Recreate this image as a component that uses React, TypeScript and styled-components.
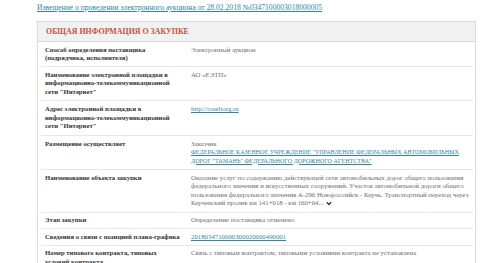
import React from 'react';
import styled, { createGlobalStyle } from 'styled-components';

const GlobalStyle = createGlobalStyle`
  html, body {
    margin: 0;
    padding: 0;
    background: #ffffff;
  }
  body {
    font-family: "Liberation Serif", "DejaVu Serif", serif;
    color: #333;
  }
`;

const Page = styled.div`
  padding: 3px 4px 0 37px;
  width: 480px;
  box-sizing: border-box;
`;

const TopLink = styled.a`
  display: block;
  font-size: 7.6px;
  line-height: 9px;
  color: #2f86a6;
  text-decoration: underline;
  margin-bottom: 9px;
`;

const Card = styled.section`
  border: 1px solid #dcdcdc;
  border-bottom: none;
  box-shadow: 0 0 2px rgba(0, 0, 0, 0.06);
`;

const Header = styled.div`
  background: #eff1f2;
  border-bottom: 1px solid #d6d8da;
  height: 19px;
  display: flex;
  align-items: center;
  padding-left: 8px;
`;

const Title = styled.h2`
  margin: 0;
  font-size: 7.9px;
  font-weight: bold;
  color: #c4553a;
`;

const Rows = styled.div`
  padding: 0 2px 0 3px;
`;

const Row = styled.div<{ $pad?: number }>`
  display: grid;
  grid-template-columns: 146px minmax(0, 1fr);
  padding: ${(p) => p.$pad ?? 3.5}px 1px ${(p) => p.$pad ?? 3.5}px 4px;
  border-bottom: 1px solid #e6e6e6;
  line-height: 8.5px;
`;

const Label = styled.div`
  font-size: 6.7px;
  font-weight: bold;
  color: #333;
  white-space: nowrap;
`;

const Value = styled.div`
  font-size: 6.8px;
  color: #6e6e6e;
  white-space: nowrap;
`;

const ValueLink = styled.a<{ $caps?: boolean }>`
  color: #2f86a6;
  text-decoration: underline;
  font-size: ${(p) => (p.$caps ? '6.1px' : 'inherit')};
`;

const Chevron = styled.svg`
  width: 6px;
  height: 5px;
  margin-left: 2px;
  vertical-align: -0.5px;
`;

const lines = (parts: React.ReactNode[]) =>
  parts.map((p, i) => (
    <React.Fragment key={i}>
      {i > 0 && <br />}
      {p}
    </React.Fragment>
  ));

type Item = { label: string[]; value: React.ReactNode; pad?: number };

const items: Item[] = [
  {
    label: ['Способ определения поставщика', '(подрядчика, исполнителя)'],
    value: 'Электронный аукцион',
  },
  {
    label: ['Наименование электронной площадки в', 'информационно-телекоммуникационной', 'сети "Интернет"'],
    value: 'АО «ЕЭТП»',
  },
  {
    label: ['Адрес электронной площадки в', 'информационно-телекоммуникационной', 'сети "Интернет"'],
    value: <ValueLink>http://roseltorg.ru</ValueLink>,
    pad: 4.5,
  },
  {
    label: ['Размещение осуществляет'],
    value: (
      <>
        Заказчик
        <br />
        <ValueLink $caps>
          {lines([
            'ФЕДЕРАЛЬНОЕ КАЗЕННОЕ УЧРЕЖДЕНИЕ "УПРАВЛЕНИЕ ФЕДЕРАЛЬНЫХ АВТОМОБИЛЬНЫХ',
            'ДОРОГ "ТАМАНЬ" ФЕДЕРАЛЬНОГО ДОРОЖНОГО АГЕНТСТВА"',
          ])}
        </ValueLink>
      </>
    ),
  },
  {
    label: ['Наименование объекта закупки'],
    value: (
      <>
        {lines([
          'Оказание услуг по содержанию действующей сети автомобильных дорог общего пользования',
          'федерального значения и искусственных сооружений. Участок автомобильной дороги общего',
          'пользования федерального значения А-290 Новороссийск - Керчь. Транспортный переход через',
          'Керченский пролив км 141+018 - км 160+04...',
        ])}
        <Chevron viewBox="0 0 12 10">
          <path d="M1.5 2.5 L6 7 L10.5 2.5" fill="none" stroke="#333" strokeWidth="2.6" />
        </Chevron>
      </>
    ),
    pad: 4,
  },
  { label: ['Этап закупки'], value: 'Определение поставщика отменено' },
  {
    label: ['Сведения о связи с позицией плана-графика'],
    value: <ValueLink>2018034710000300020000490001</ValueLink>,
    pad: 3.5,
  },
  {
    label: ['Номер типового контракта, типовых', 'условий контракта'],
    value: 'Связь с типовым контрактом, типовыми условиями контракта не установлена',
  },
];

export default function App() {
  return (
    <>
      <GlobalStyle />
      <Page>
        <TopLink>Извещение о проведении электронного аукциона от 28.02.2018 №0347100003018000005</TopLink>
        <Card>
          <Header>
            <Title>ОБЩАЯ ИНФОРМАЦИЯ О ЗАКУПКЕ</Title>
          </Header>
          <Rows>
            {items.map((it) => (
              <Row key={it.label[0]} $pad={it.pad}>
                <Label>{lines(it.label)}</Label>
                <Value>{it.value}</Value>
              </Row>
            ))}
          </Rows>
        </Card>
      </Page>
    </>
  );
}
